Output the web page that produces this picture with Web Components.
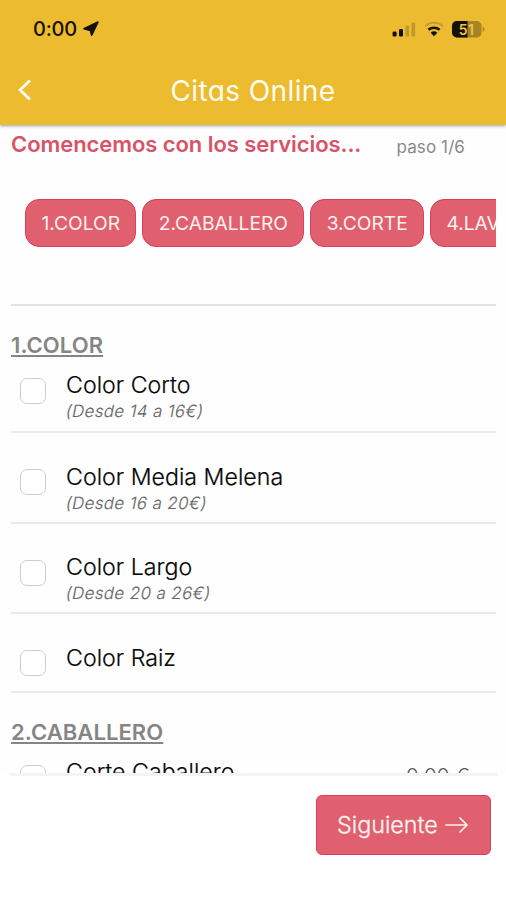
<!DOCTYPE html>
<html lang="es">
<head>
<meta charset="utf-8">
<title>Citas Online</title>
<style>
body{margin:0;background:#fefefe;font-family:Inter,"Liberation Sans",sans-serif;color:#111}
</style>
</head>
<body>
<booking-app></booking-app>
<script>
const define = (name, html) => {
  const tpl = document.createElement('template');
  tpl.innerHTML = html;
  customElements.define(name, class extends HTMLElement {
    constructor() {
      super();
      this.attachShadow({mode: 'open'}).append(tpl.content.cloneNode(true));
    }
  });
};

define('status-bar', `
<style>
:host{display:flex;align-items:center;height:58px;padding:0 21px 0 33px;color:#141005}
.time{font:500 20px/24px Inter,sans-serif;letter-spacing:-.2px}
.loc{margin-left:5px;margin-right:auto}
svg{display:block}
.wifi{margin:0 8px 0 8px}
.battery{position:relative;width:33px;height:17px}
.battery span{position:absolute;left:0;top:0;width:29px;text-align:center;font:600 14px/17px Inter,sans-serif;letter-spacing:.3px;color:#efc343}
</style>
<span class="time">0:00</span>
<svg class="loc" width="18" height="18" viewBox="0 0 18 18"><path d="M16 2 9.7 15.2 8.3 10.4 2 8.8Z" fill="currentColor" stroke="currentColor" stroke-width="1.6" stroke-linejoin="round"/></svg>
<svg width="24" height="16" viewBox="0 0 24 16"><rect x=".6" y="10.5" width="4" height="5" rx="1.2" fill="#141005"/><rect x="7" y="8" width="4" height="7.5" rx="1.2" fill="#141005"/><rect x="13.5" y="4.5" width="3.6" height="11" rx="1.2" fill="#c0972a"/><rect x="19.5" y="1.4" width="3.6" height="14.1" rx="1.2" fill="#c0972a"/></svg>
<svg class="wifi" width="20" height="16" viewBox="0 0 20 16"><g fill="none" stroke-width="2.2"><path d="M1.2 5.2a13 13 0 0 1 17.6 0" stroke="#c79c2c"/><path d="M4.4 8.8a8.5 8.5 0 0 1 11.2 0" stroke="#141005" stroke-width="2.5"/></g><path d="M6.7 11.7a5 5 0 0 1 6.6 0L10 15.2Z" fill="#141005"/></svg>
<div class="battery"><svg width="33" height="17" viewBox="0 0 33 17"><rect width="29.5" height="16.5" rx="4.8" fill="#a68426"/><path d="M15.5 0H4.8A4.8 4.8 0 0 0 0 4.8v6.9a4.8 4.8 0 0 0 4.8 4.8H15.5Z" fill="#141005"/><path d="M30.7 5.6q3.6 2.7 0 5.4Z" fill="#a68426"/></svg><span>51</span></div>
`);

define('nav-header', `
<style>
:host{display:block;height:125px;background:#edbb2f;box-shadow:0 1px 3px rgba(70,80,100,.55);position:relative}
.nav{display:grid;grid-template-columns:50px 1fr 50px;align-items:center;height:65px;color:#fffdf2}
svg{display:block;margin-left:17px;margin-top:-1px}
h1{margin:0;text-align:center;font:400 28px/36px Inter,sans-serif;font-feature-settings:"cv11";letter-spacing:.4px}
</style>
<status-bar></status-bar>
<div class="nav"><svg width="16" height="22" viewBox="0 0 16 22"><path d="M13 1.5 3 11l10 9.5" fill="none" stroke="currentColor" stroke-width="2.7"/></svg><h1><slot></slot></h1></div>
`);

define('step-title', `
<style>
:host{display:flex;justify-content:space-between;align-items:center;height:40px;padding:0 41px 0 11px}
h2{margin:-2px 0 0;font:600 22px/28px Inter,sans-serif;letter-spacing:-.07px;color:#d95368}
span{font:400 17px/24px Inter,sans-serif;letter-spacing:.1px;color:#888;padding-top:3px}
</style>
<h2><slot></slot></h2><span><slot name="step"></slot></span>
`);

define('category-chip', `
<style>
:host{display:block;flex:none;box-sizing:border-box;height:47.5px;padding:0 15.2px 0 15.5px;border:1px solid #d93f5d;border-radius:14px;background:#e06070;color:#fff1ec;font:400 19.2px/47.5px Inter,sans-serif;white-space:nowrap}
</style><slot></slot>
`);

define('chip-strip', `
<style>
:host{display:flex;gap:6px;overflow:hidden;margin:34px 10px 0 11px;padding:0 0 57px 14px;border-bottom:2px solid #e3e3e3}
</style><slot></slot>
`);

define('service-group', `
<style>
:host{display:block;margin-left:11px;margin-right:10px}
h3{margin:0 0 9px;font:600 22px/26px Inter,sans-serif;letter-spacing:.08px;color:#858585;text-decoration:underline;text-decoration-thickness:1.5px;text-underline-offset:2px;text-decoration-skip-ink:none}
</style>
<h3><slot name="title"></slot></h3><slot></slot>
`);

define('service-item', `
<style>
:host{display:grid;grid-template-columns:55px 1fr auto;align-items:start;box-sizing:border-box;height:90.5px;border-bottom:2px solid #e9eaea;padding-top:29.5px}
.box{box-sizing:border-box;width:26px;height:26px;margin:6.5px 0 0 9px;border:1.6px solid #cdcdcd;border-radius:7px;background:#fff}
.name{font:300 23.2px/28px Inter,sans-serif;color:#080808;-webkit-text-stroke:.2px #080808}
.note{font:300 16.8px/25px Inter,sans-serif;letter-spacing:.45px;color:#666;-webkit-text-stroke:.15px #666}
.note ::slotted(*){display:inline-block;transform:skewX(-11deg)}
.price{font:300 20.5px/26px Inter,sans-serif;color:#555;padding:5px 26px 0 0;letter-spacing:.3px}
</style>
<div class="box"></div><div><div class="name"><slot></slot></div><div class="note"><slot name="note"></slot></div></div><div class="price"><slot name="price"></slot></div>
`);

define('action-footer', `
<style>
:host{display:flex;justify-content:flex-end;align-items:flex-start;box-sizing:border-box;height:127px;padding:22px 15px 0;background:#fff;position:relative}
:host::before{content:"";position:absolute;left:10px;right:8px;top:0;height:3px;background:#f4f4f4}
button{display:flex;align-items:center;box-sizing:border-box;width:175px;height:60px;padding:0 0 1px 20px;border:1.5px solid #d93f5d;border-radius:6px;background:#e06070;color:#fff2ee;font:300 23.3px/30px Inter,sans-serif;-webkit-text-stroke:.3px #fff2ee}
svg{margin-left:7px}
</style>
<button><slot></slot><svg width="24" height="18" viewBox="0 0 24 18"><path d="M1 9h21M15 2l7 7-7 7" fill="none" stroke="currentColor" stroke-width="1.7" stroke-linejoin="round" stroke-linecap="round"/></svg></button>
`);

define('booking-app', `
<style>
:host{display:flex;flex-direction:column;height:900px;overflow:hidden;background:#fefefe}
main{flex:1;min-height:0;overflow:hidden}
service-group{padding-top:26px}
service-item.first{height:66.5px;padding-top:4.5px}
service-item.last{height:78.5px}
</style>
<nav-header>Citas Online</nav-header>
<main>
<step-title>Comencemos con los servicios...<span slot="step">paso 1/6</span></step-title>
<chip-strip><category-chip>1.COLOR</category-chip><category-chip>2.CABALLERO</category-chip><category-chip>3.CORTE</category-chip><category-chip>4.LAV</category-chip></chip-strip>
<service-group><span slot="title">1.COLOR</span>
<service-item class="first">Color Corto<span slot="note">(Desde 14 a 16€)</span></service-item>
<service-item>Color Media Melena<span slot="note">(Desde 16 a 20€)</span></service-item>
<service-item>Color Largo<span slot="note">(Desde 20 a 26€)</span></service-item>
<service-item class="last">Color Raiz</service-item>
</service-group>
<service-group><span slot="title">2.CABALLERO</span>
<service-item class="first">Corte Caballero<span slot="price">0.00 €</span></service-item>
</service-group>
</main>
<action-footer>Siguiente</action-footer>
`);
</script>
</body>
</html>
